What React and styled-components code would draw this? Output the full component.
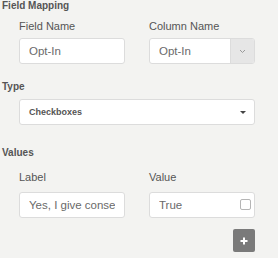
import React from 'react'
import styled, { createGlobalStyle } from 'styled-components'

const GlobalStyle = createGlobalStyle`
  html, body {
    margin: 0;
    padding: 0;
    background: #f3f3f1;
  }
  body {
    font-family: "Liberation Sans", Arial, sans-serif;
    width: 278px;
    height: 258px;
    overflow: hidden;
  }
`

const Panel = styled.div`
  width: 278px;
  height: 258px;
  box-sizing: border-box;
  padding: 0 0 0 2px;
`

const SectionTitle = styled.div`
  font-size: 10px;
  font-weight: 700;
  line-height: 11px;
  color: #555;
  margin-top: ${(p) => p.$top || 0}px;
`

const Grid = styled.div`
  display: grid;
  grid-template-columns: 106px 106px;
  column-gap: 24px;
  padding-left: 17px;
  margin-top: ${(p) => p.$top || 0}px;
`

const Field = styled.div`
  display: flex;
  flex-direction: column;
  gap: ${(p) => p.$gap || 5}px;
`

const Label = styled.label`
  font-size: 11px;
  line-height: 13px;
  color: #555;
`

const Box = styled.div`
  position: relative;
  height: 26px;
  box-sizing: border-box;
  border: 1px solid #dcdcdc;
  border-radius: 3px;
  background: #fff;
  display: flex;
  align-items: stretch;
  overflow: hidden;
`

const Input = styled.input`
  flex: 1;
  min-width: 0;
  border: none;
  outline: none;
  background: transparent;
  padding: 0 9px;
  font-family: inherit;
  font-size: 11.5px;
  color: #6a6a6a;
`

const AddonButton = styled.div`
  width: 23px;
  background: #e6e6e6;
  border-left: 1px solid #dcdcdc;
  display: flex;
  align-items: center;
  justify-content: center;
`

const Check = styled.span`
  position: absolute;
  right: 3px;
  top: 6px;
  width: 9px;
  height: 9px;
  border: 1px solid #b5b5b5;
  border-radius: 2px;
  background: #fff;
`

const TypeSelect = styled(Box)`
  margin: 7px 0 0 17px;
  width: 236px;
  align-items: center;
  justify-content: space-between;
  padding: 0 8px 0 9px;
  font-size: 9px;
  font-weight: 700;
  color: #555;
`

const Caret = styled.span`
  width: 0;
  height: 0;
  border-left: 3px solid transparent;
  border-right: 3px solid transparent;
  border-top: 3px solid #444;
`

const Actions = styled.div`
  display: flex;
  justify-content: flex-end;
  width: 253px;
  margin-top: 11px;
`

const PlusButton = styled.button`
  width: 22px;
  height: 23px;
  padding: 0;
  border: none;
  border-radius: 2px;
  background: #7a7a7a;
  display: flex;
  align-items: center;
  justify-content: center;
  cursor: pointer;
`

const chevron = (
  <svg width="7" height="5" viewBox="0 0 7 5">
    <path d="M1 1l2.5 2.5L6 1" fill="none" stroke="#9a9a9a" strokeWidth="1" />
  </svg>
)

const plus = (
  <svg width="8" height="8" viewBox="0 0 8 8">
    <path d="M4 0.5v7M0.5 4h7" stroke="#fff" strokeWidth="2" />
  </svg>
)

export default function App() {
  return (
    <>
      <GlobalStyle />
      <Panel>
        <SectionTitle>Field Mapping</SectionTitle>
        <Grid $top={9}>
          <Field $gap={5}>
            <Label>Field Name</Label>
            <Box>
              <Input defaultValue="Opt-In" />
            </Box>
          </Field>
          <Field $gap={5}>
            <Label>Column Name</Label>
            <Box>
              <Input defaultValue="Opt-In" />
              <AddonButton>{chevron}</AddonButton>
            </Box>
          </Field>
        </Grid>

        <SectionTitle $top={17}>Type</SectionTitle>
        <TypeSelect>
          <span>Checkboxes</span>
          <Caret />
        </TypeSelect>

        <SectionTitle $top={22}>Values</SectionTitle>
        <Grid $top={13}>
          <Field $gap={8}>
            <Label>Label</Label>
            <Box>
              <Input defaultValue="Yes, I give consent" />
            </Box>
          </Field>
          <Field $gap={8}>
            <Label>Value</Label>
            <Box>
              <Input defaultValue="True" />
              <Check />
            </Box>
          </Field>
        </Grid>

        <Actions>
          <PlusButton>{plus}</PlusButton>
        </Actions>
      </Panel>
    </>
  )
}
